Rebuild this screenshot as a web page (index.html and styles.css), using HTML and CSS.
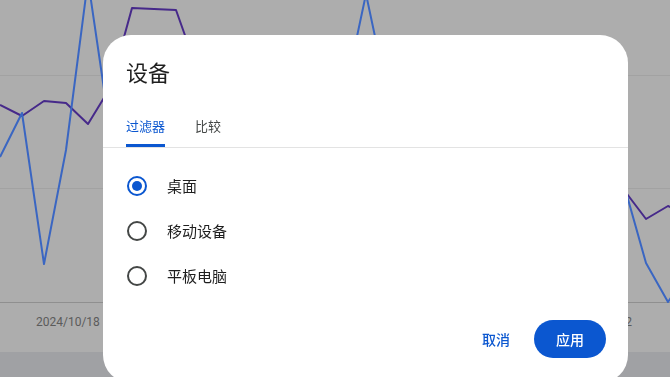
FILE: index.html
```html
<!DOCTYPE html>
<html lang="zh">
<head>
    <meta charset="UTF-8">
    <meta name="viewport" content="width=device-width, initial-scale=1.0">
    <title>设备</title>
    <link rel="stylesheet" href="styles.css">
</head>
<body>
    <!-- 背景图表 -->
    <div class="chart-page">
        <svg class="chart" width="670" height="352" viewBox="0 0 670 352">
            <line class="grid" x1="0" y1="75.5" x2="670" y2="75.5"/>
            <line class="grid" x1="0" y1="188.5" x2="670" y2="188.5"/>
            <line class="axis" x1="0" y1="302.5" x2="670" y2="302.5"/>
            <polyline class="series-purple" points="0,105 22,116 44,101 66,103 88,124 110,88 132,8 154,9 176,10 198,72 220,120"/>
            <polyline class="series-blue" points="0,157 22,113 44,264 66,150 88,-20 110,130 132,180"/>
            <polyline class="series-blue" points="330,190 352,60 366,-6 380,60 400,190"/>
            <polyline class="series-purple" points="600,170 624,190 646,219 668,206 690,215"/>
            <polyline class="series-blue" points="600,160 624,185 646,263 668,302 690,270"/>
            <text class="axis-label" x="36" y="326">2024/10/18</text>
            <text class="axis-label" x="632" y="326" text-anchor="end">2024/11/02</text>
        </svg>
        <div class="footer-band"></div>
    </div>

    <!-- 设备对话框 -->
    <div class="dialog">
        <h2 class="dialog-title">设备</h2>
        <div class="tabs">
            <div class="tab active">过滤器</div>
            <div class="tab">比较</div>
        </div>
        <div class="options">
            <label class="option">
                <span class="radio checked"></span>
                <span class="option-label">桌面</span>
            </label>
            <label class="option">
                <span class="radio"></span>
                <span class="option-label">移动设备</span>
            </label>
            <label class="option">
                <span class="radio"></span>
                <span class="option-label">平板电脑</span>
            </label>
        </div>
        <div class="actions">
            <button class="btn-text">取消</button>
            <button class="btn-filled">应用</button>
        </div>
    </div>
</body>
</html>
```

FILE: styles.css
```css
/* 全局样式 */
body {
    margin: 0;
    overflow: hidden;
    background-color: #adadad;
    font-family: "Noto Sans CJK SC", Roboto, sans-serif;
}

/* 图表区域 */
.chart-page {
    width: 670px;
    height: 377px;
    display: flex;
    flex-direction: column;
}

.chart {
    display: block;
}

.grid {
    stroke: #a2a2a2;
    stroke-width: 1;
}

.axis {
    stroke: #8f8f8f;
    stroke-width: 1;
}

.series-blue {
    fill: none;
    stroke: #3a66c2;
    stroke-width: 2;
    stroke-linejoin: round;
}

.series-purple {
    fill: none;
    stroke: #46298a;
    stroke-width: 2;
    stroke-linejoin: round;
}

.axis-label {
    font-family: Roboto, sans-serif;
    font-size: 12px;
    fill: #5b5b5b;
}

.footer-band {
    flex: 1;
    background-color: #a0a1a4;
}

/* 对话框 */
.dialog {
    position: fixed; /* 浮在图表之上 */
    top: 35px;
    left: 103px;
    width: 525px;
    height: 348px;
    box-sizing: border-box;
    padding-top: 22px;
    background-color: #ffffff;
    border-radius: 28px;
    display: flex;
    flex-direction: column;
    overflow: hidden;
}

.dialog-title {
    margin: 0 0 19px 0;
    padding: 0 23px;
    font-size: 22px;
    font-weight: 400;
    line-height: 28px;
    color: #1f1f1f;
}

/* 标签页 */
.tabs {
    display: flex;
    gap: 30px;
    padding: 0 23px;
    border-bottom: 1px solid #e3e3e3;
}

.tab {
    height: 43px;
    box-sizing: border-box;
    padding-top: 12px;
    font-size: 13px;
    line-height: 20px;
    color: #444746;
    border-bottom: 3px solid transparent;
}

.tab.active {
    color: #0b57d0;
    border-bottom-color: #0b57d0;
    border-radius: 2px 2px 0 0;
}

/* 选项列表 */
.options {
    display: flex;
    flex-direction: column;
    padding: 15px 24px 0 24px;
}

.option {
    height: 45px;
    display: flex;
    align-items: center;
    gap: 20px;
}

.radio {
    width: 20px;
    height: 20px;
    box-sizing: border-box;
    border: 2px solid #444746;
    border-radius: 50%;
    display: flex;
    align-items: center;
    justify-content: center;
}

.radio.checked {
    border-color: #0b57d0;
}

.radio.checked::after {
    content: "";
    width: 10px;
    height: 10px;
    border-radius: 50%;
    background-color: #0b57d0;
}

.option-label {
    font-size: 15px;
    color: #1f1f1f;
}

/* 底部按钮 */
.actions {
    display: flex;
    justify-content: flex-end;
    align-items: center;
    gap: 12px;
    padding: 22px 22px 0 0;
}

.btn-text {
    height: 38px;
    padding: 0 12px;
    border: none;
    background: none;
    font-family: "Noto Sans CJK SC", sans-serif;
    font-size: 14px;
    font-weight: 500;
    color: #0b57d0;
}

.btn-filled {
    width: 72px;
    height: 38px;
    border: none;
    border-radius: 19px;
    background-color: #0b57d0;
    font-family: "Noto Sans CJK SC", sans-serif;
    font-size: 14px;
    font-weight: 500;
    color: #ffffff;
}
```
